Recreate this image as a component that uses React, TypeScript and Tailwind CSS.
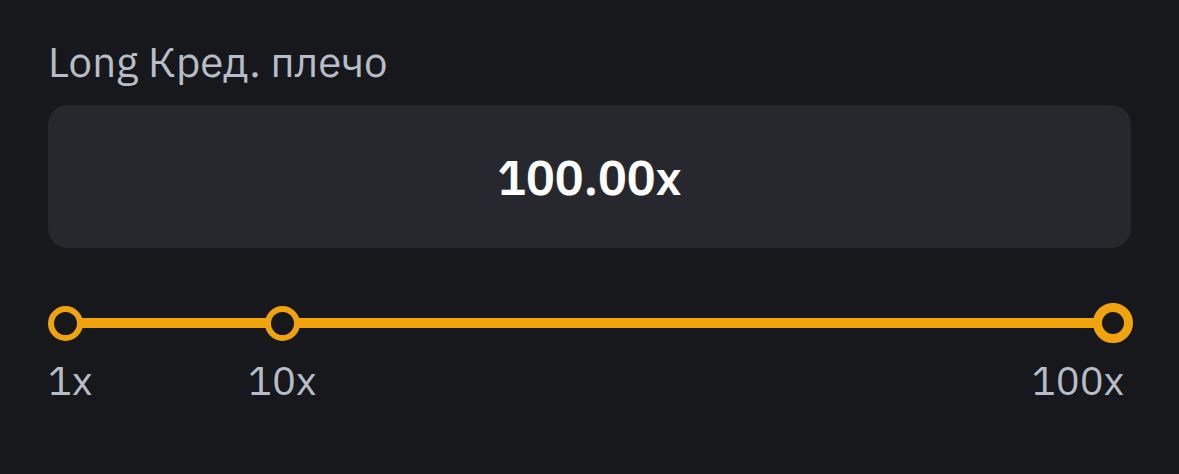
import React from "react";

const marks = [
  { pct: 0, big: false },
  { pct: 20.7, big: false },
  { pct: 100, big: true },
];

export default function App() {
  return (
    <div
      className="w-[1179px] h-[474px] bg-[#17181c] px-[48px] pt-[38px] flex flex-col"
      style={{ fontFamily: '"IBM Plex Sans", "Noto Sans", Inter, sans-serif' }}
    >
      <div className="text-[42px] leading-[48px] text-[#b7bdc6]">Long Кред. плечо</div>

      <div className="mt-[19px] h-[143px] rounded-[20px] bg-[#26282d] flex items-center justify-center">
        <span className="text-[48px] font-semibold text-white">100.00x</span>
      </div>

      {/* slider track + thumbs */}
      <div className="relative mt-[55px] h-[40px] mx-[17px]">
        <div className="absolute left-0 right-0 top-[15px] h-[10px] bg-[#f0a30c]" />
        {marks.map((m) => (
          <div
            key={m.pct}
            className={
              m.big
                ? "absolute top-0 w-[40px] h-[40px] -ml-[21px] rounded-full border-[9px] border-[#f0a30c] bg-[#17181c]"
                : "absolute top-[3px] w-[35px] h-[35px] -ml-[17px] rounded-full border-[6px] border-[#f0a30c] bg-[#17181c]"
            }
            style={{ left: `${m.pct}%` }}
          />
        ))}
      </div>

      <div className="mt-[13px] flex items-center text-[40px] leading-[48px] text-[#b7bdc6]">
        <span className="w-[200px]">1x</span>
        <span>10x</span>
        <span className="ml-auto mr-[7px]">100x</span>
      </div>
    </div>
  );
}
